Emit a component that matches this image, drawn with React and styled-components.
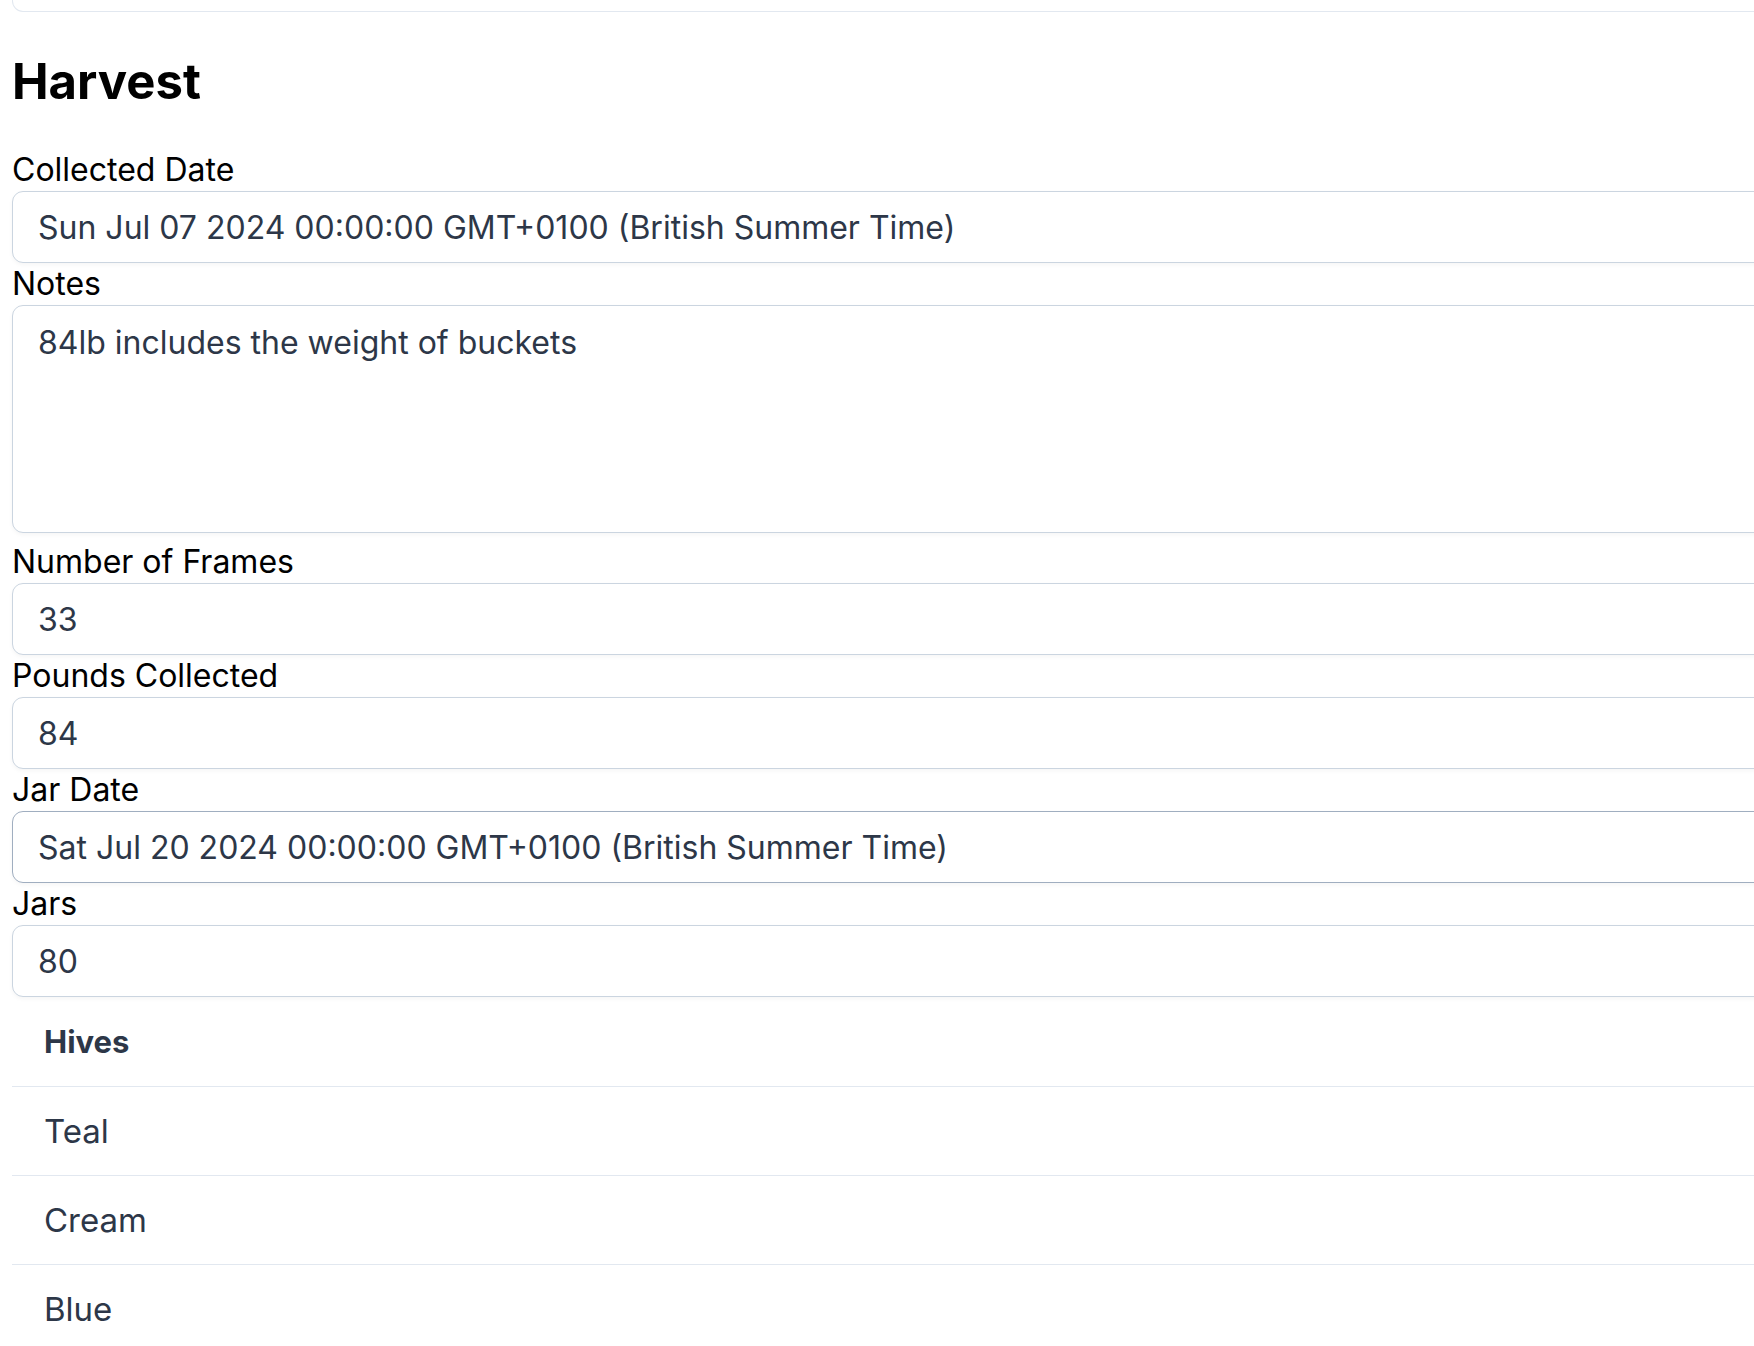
import React from "react";
import styled, { createGlobalStyle } from "styled-components";

const GlobalStyle = createGlobalStyle`
  html, body {
    margin: 0;
    padding: 0;
    background: #fff;
    overflow: hidden;
  }
  body {
    font-family: Inter, "Noto Sans", "Liberation Sans", sans-serif;
  }
  * {
    box-sizing: border-box;
  }
`;

const harvest = {
  collectedDate: "Sun Jul 07 2024 00:00:00 GMT+0100 (British Summer Time)",
  notes: "84lb includes the weight of buckets",
  frames: "33",
  pounds: "84",
  jarDate: "Sat Jul 20 2024 00:00:00 GMT+0100 (British Summer Time)",
  jars: "80",
};

const hives = ["Teal", "Cream", "Blue", "Green"];

const App = () => {
  return (
    <Page>
      <GlobalStyle />
      <PrevCard />
      <Heading>Harvest</Heading>
      <Form>
        <Label>Collected Date</Label>
        <Input readOnly value={harvest.collectedDate} />
        <Label>Notes</Label>
        <TextArea readOnly value={harvest.notes} />
        <Label>Number of Frames</Label>
        <Input readOnly value={harvest.frames} />
        <Label>Pounds Collected</Label>
        <Input readOnly value={harvest.pounds} />
        <Label>Jar Date</Label>
        <Input readOnly $hovered value={harvest.jarDate} />
        <Label>Jars</Label>
        <Input readOnly value={harvest.jars} />
      </Form>
      <Table>
        <thead>
          <tr>
            <Th>Hives</Th>
          </tr>
        </thead>
        <tbody>
          {hives.map((hive) => (
            <tr key={hive}>
              <Td>{hive}</Td>
            </tr>
          ))}
        </tbody>
      </Table>
    </Page>
  );
};

const Page = styled.div`
  width: 2200px;
  margin-left: 12px;
`;

const PrevCard = styled.div`
  height: 12px;
  border: 1px solid #e2e8f0;
  border-top: none;
  border-radius: 0 0 11px 11px;
`;

const Heading = styled.h2`
  margin: 42px 0 39px;
  font-size: 49px;
  line-height: 56px;
  font-weight: 700;
  color: #000;
`;

const Form = styled.div`
  display: flex;
  flex-direction: column;
`;

const Label = styled.label`
  display: block;
  height: 42px;
  font-size: 32px;
  line-height: 42px;
  color: #000;
`;

const Input = styled.input`
  display: block;
  width: 100%;
  height: 72px;
  padding: 0 25px;
  font-family: inherit;
  font-size: 32px;
  color: #2d3748;
  background: #fff;
  border: 1px solid ${(p) => (p.$hovered ? "#a0aec0" : "#cbd5e0")};
  border-radius: 11px;
  box-shadow: 0 2px 4px rgba(0, 0, 0, 0.04);
  outline: none;
`;

const TextArea = styled.textarea`
  display: block;
  width: 100%;
  height: 228px;
  margin-bottom: 8px;
  padding: 18px 25px;
  font-family: inherit;
  font-size: 32px;
  line-height: 1.21;
  color: #2d3748;
  background: #fff;
  border: 1px solid #cbd5e0;
  border-radius: 11px;
  box-shadow: 0 2px 4px rgba(0, 0, 0, 0.04);
  resize: none;
  outline: none;
`;

const Table = styled.table`
  width: 100%;
  border-collapse: collapse;
`;

const Th = styled.th`
  height: 89px;
  padding: 0 32px;
  text-align: left;
  font-size: 31px;
  font-weight: 700;
  color: #2d3748;
  border-bottom: 1px solid #e2e8f0;
`;

const Td = styled.td`
  height: 89px;
  padding: 0 32px;
  font-size: 33px;
  color: #2d3748;
  border-bottom: 1px solid #e2e8f0;
`;

export default App;
